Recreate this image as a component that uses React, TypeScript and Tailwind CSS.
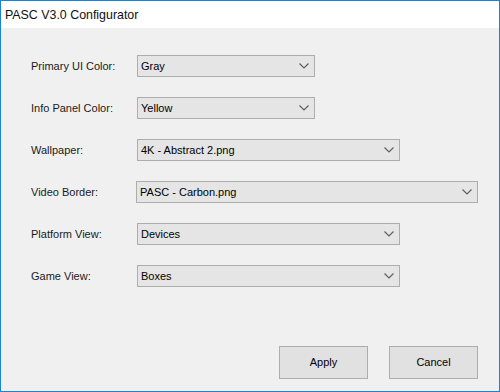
import React from "react";

const rows = [
  { label: "Primary UI Color:", value: "Gray", width: "w-[178px]" },
  { label: "Info Panel Color:", value: "Yellow", width: "w-[178px]" },
  { label: "Wallpaper:", value: "4K - Abstract 2.png", width: "w-[263px]" },
  { label: "Video Border:", value: "PASC - Carbon.png", width: "w-[345px]" },
  { label: "Platform View:", value: "Devices", width: "w-[263px]" },
  { label: "Game View:", value: "Boxes", width: "w-[263px]" },
];

const Chevron = () => (
  <svg width="10" height="6" viewBox="0 0 10 6" className="shrink-0">
    <path d="M0.5 0.5 L5 5 L9.5 0.5" fill="none" stroke="#606060" strokeWidth="1.2" />
  </svg>
);

const ComboBox = ({ value, width }: { value: string; width: string }) => {
  return (
    <div
      className={`${width} h-[22px] flex items-center justify-between border border-[#adadad] bg-[#e5e5e5] pl-[3px] pr-[5px]`}
    >
      <span>{value}</span>
      <Chevron />
    </div>
  );
};

const WinButton = ({ children }: { children: React.ReactNode }) => (
  <button className="w-[89px] h-[33px] border border-[#adadad] bg-[#e1e1e1] text-black flex items-center justify-center">
    {children}
  </button>
);

export default function App() {
  return (
    <div
      className="w-[500px] h-[392px] border border-[#1883d7] bg-[#f0f0f0] flex flex-col text-[11px] text-black"
      style={{ fontFamily: '"Liberation Sans", Arial, sans-serif' }}
    >
      {/* Title Bar */}
      <div className="h-[27px] bg-white flex items-center pl-[4px] pt-[1px] text-[12.4px] text-[#111]">
        PASC V3.0 Configurator
      </div>
      <div className="flex-1 flex flex-col pt-[27px] pl-[30px] pr-[21px] pb-[12px]">
        <div className="flex flex-col gap-[20px]">
          {rows.map((r) => (
            <div key={r.label} className="flex items-center h-[22px]">
              <div className="w-[106px] text-[#1a1a1a]">{r.label}</div>
              <ComboBox value={r.value} width={r.width} />
            </div>
          ))}
        </div>
        <div className="mt-auto flex justify-end gap-[21px]">
          <WinButton>Apply</WinButton>
          <WinButton>Cancel</WinButton>
        </div>
      </div>
    </div>
  );
}
